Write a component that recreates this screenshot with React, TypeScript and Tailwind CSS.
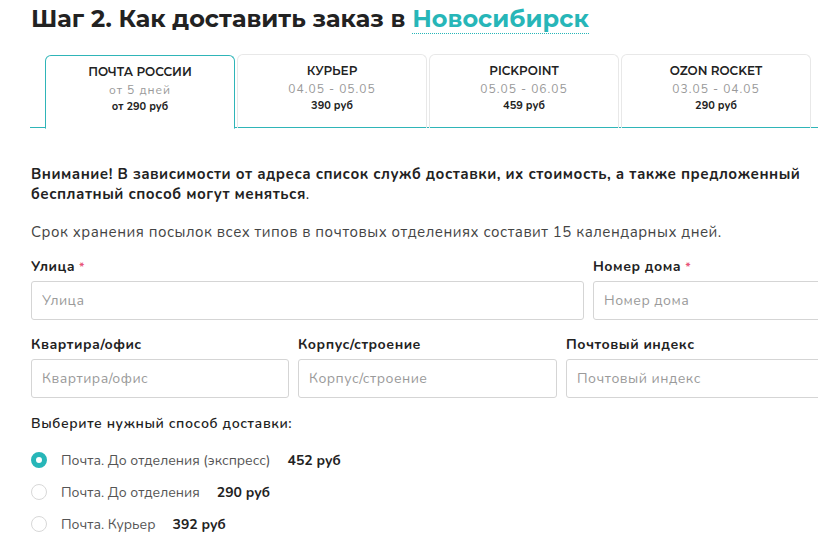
import { useState } from "react";

const tabs = [
  { title: "ПОЧТА РОССИИ", date: "от 5 дней", price: "от 290 руб" },
  { title: "КУРЬЕР", date: "04.05 - 05.05", price: "390 руб" },
  { title: "PICKPOINT", date: "05.05 - 06.05", price: "459 руб" },
  { title: "OZON ROCKET", date: "03.05 - 04.05", price: "290 руб" },
];

const options = [
  { label: "Почта. До отделения (экспресс)", price: "452 руб" },
  { label: "Почта. До отделения", price: "290 руб" },
  { label: "Почта. Курьер", price: "392 руб" },
];

const Field = ({ label, required, width }: { label: string; required?: boolean; width: string }) => (
  <div className={`flex flex-col shrink-0 ${width}`}>
    <label className="text-[14px] font-bold text-[#222] leading-5 mb-[4px] tracking-[0.5px]">
      {label}
      {required && <span className="text-[#e8577a] ml-1 text-[12px] align-top">*</span>}
    </label>
    <input
      placeholder={label}
      className="h-[39px] border border-[#d5d5d5] rounded-[3px] px-[10px] text-[14px] tracking-[0.5px] text-[#333] placeholder:text-[#9a9a9a] outline-none"
    />
  </div>
);

export default function App() {
  const [active, setActive] = useState(0);
  const [method, setMethod] = useState(0);

  return (
    <div className="w-[818px] h-[539px] overflow-hidden bg-white font-['Nunito','Noto_Sans',sans-serif]">
      <div className="w-[900px] pl-[31px] pt-[3px]">
        <h1 className="font-['Montserrat','Inter',sans-serif] text-[24px] font-bold text-[#222] leading-8">
          Шаг 2. Как доставить заказ в{" "}
          <span className="text-[#27b6b8] border-b border-dotted border-[#27b6b8]">Новосибирск</span>
        </h1>

        {/* tabs */}
        <div className="mt-[19px] -ml-px flex gap-[2px] pl-[15px] border-b border-[#2fb5b8] h-[74px]">
          {tabs.map((t, i) => (
            <button
              key={t.title}
              onClick={() => setActive(i)}
              className={`w-[190px] h-[74px] rounded-t-[6px] border flex flex-col items-center pt-[8px] ${
                i === active
                  ? "border-[#2fb5b8] border-b-white bg-white relative top-px"
                  : "border-[#e8e8e8] border-b-0"
              }`}
            >
              <span className="font-['Montserrat','Inter',sans-serif] text-[12px] font-semibold text-[#222] leading-4">
                {t.title}
              </span>
              <span className="text-[12px] text-[#9a9a9a] tracking-[1px] leading-[18px] mt-px">{t.date}</span>
              <span className="text-[11px] font-bold text-[#222] leading-4">{t.price}</span>
            </button>
          ))}
        </div>

        <p className="mt-[36px] text-[15px] tracking-[0.5px] font-bold text-[#222] leading-5 w-[790px]">
          Внимание! В зависимости от адреса список служб доставки, их стоимость, а также предложенный бесплатный
          способ могут меняться<span className="font-normal">.</span>
        </p>
        <p className="mt-[18px] text-[15px] tracking-[0.5px] text-[#444] leading-5">
          Срок хранения посылок всех типов в почтовых отделениях составит 15 календарных дней.
        </p>

        <div className="mt-[15px] flex gap-[9px]">
          <Field label="Улица" required width="w-[553px]" />
          <Field label="Номер дома" required width="w-[258px]" />
        </div>
        <div className="mt-[15px] flex gap-[9px]">
          <Field label="Квартира/офис" width="w-[258px]" />
          <Field label="Корпус/строение" width="w-[259px]" />
          <Field label="Почтовый индекс" width="w-[258px]" />
        </div>

        <p className="mt-[16px] text-[14px] tracking-[0.6px] font-semibold text-[#222] leading-5">
          Выберите нужный способ доставки:
        </p>

        <div className="mt-[16px] flex flex-col gap-[12px]">
          {options.map((o, i) => (
            <label key={o.label} className="flex items-center h-5 cursor-pointer" onClick={() => setMethod(i)}>
              <span
                className={`w-[16px] h-[16px] rounded-full shrink-0 ${
                  i === method ? "border-[5px] border-[#27b6b8] bg-white" : "border border-[#d8d8d8] bg-white"
                }`}
              />
              <span className="ml-[14px] text-[14px] text-[#555]">{o.label}</span>
              <span className="ml-[17px] text-[14px] font-bold text-[#222]">{o.price}</span>
            </label>
          ))}
        </div>
      </div>
    </div>
  );
}
